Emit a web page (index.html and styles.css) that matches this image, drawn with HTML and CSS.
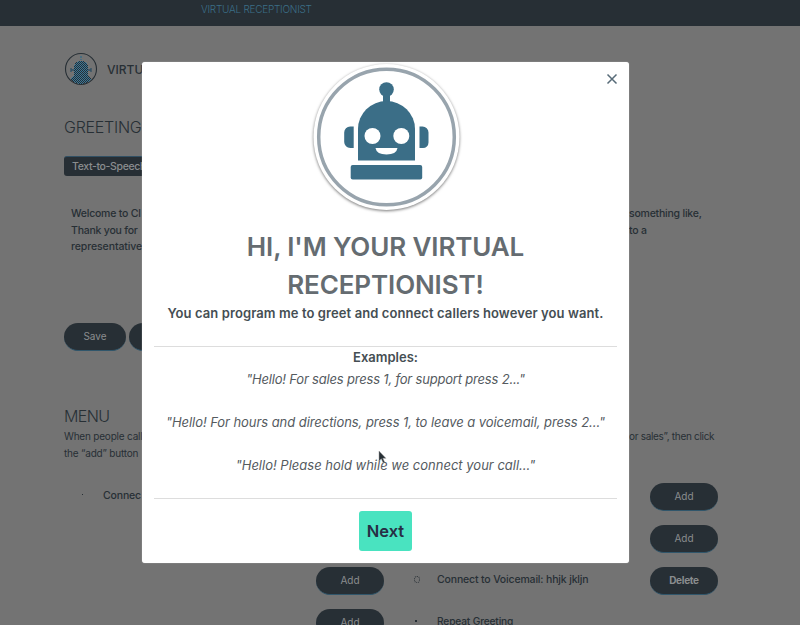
FILE: index.html
```html
<!DOCTYPE html>
<html lang="en">
<head>
<meta charset="utf-8">
<title>Virtual Receptionist</title>
<link rel="stylesheet" href="styles.css">
</head>
<body>
<header class="topbar"><span class="crumb">VIRTUAL RECEPTIONIST</span></header>
<main class="page">
  <div class="brand">
    <svg class="brand-icon" width="34" height="34" viewBox="0 0 34 34">
      <defs><pattern id="mesh" width="2" height="2" patternUnits="userSpaceOnUse"><rect width="2" height="2" fill="#3b7898"/><path d="M0 0h1v1H0zM1 1h1v1H1z" fill="#272f35"/></pattern></defs>
      <circle cx="17" cy="17" r="15.5" fill="none" stroke="#272f35" stroke-width="1.1"/>
      <path d="M17 4v4" stroke="#3b6e87" stroke-width="1.5" stroke-dasharray="2 1"/>
      <path d="M10 27V16q0-7 7-7t7 7v8l3 2v2q-10 8-20 0v-2l3-2z" fill="url(#mesh)" shape-rendering="crispEdges"/>
      <path d="M7 16v4M27 16v4M7 18h3M24 18h3" stroke="#305064" stroke-width="1.3"/>
    </svg>
    <span class="brand-name">VIRTU</span>
  </div>
  <h2 class="section-title greeting-title">GREETING</h2>
  <div class="tab">Text-to-Speech</div>
  <div class="message">
    <div class="line"><span class="m1">Welcome to Cl</span><span class="r1">something like,</span></div>
    <div class="line"><span class="m2">Thank you for</span><span class="r2">to a</span></div>
    <div class="line"><span class="m3">representative</span></div>
  </div>
  <div class="actions"><span class="pill save">Save</span><span class="pill save"></span></div>
  <h2 class="section-title menu-title">MENU</h2>
  <div class="help">
    <div class="line"><span class="h1">When people call</span><span class="hr1">or sales”, then click</span></div>
    <div class="line"><span class="h2">the “add” button</span></div>
  </div>
  <div class="menu">
    <div class="row"><i class="dot"></i><span class="item left">Connec</span><span class="pill end">Add</span></div>
    <div class="row"><span class="pill end">Add</span></div>
    <div class="row"><span class="pill mid">Add</span><i class="ring"></i><span class="item voicemail">Connect to Voicemail: hhjk jkljn</span><span class="pill end strong">Delete</span></div>
    <div class="row"><span class="pill mid">Add</span><i class="dot second"></i><span class="item repeat">Repeat Greeting</span></div>
  </div>
</main>
<section class="modal">
  <svg class="close" width="12" height="12" viewBox="0 0 12 12"><path d="M1.500 1.500l9 9M10.500 1.500l-9 9" stroke="#576b78" stroke-width="1.500"/></svg>
  <svg class="robot" width="156" height="156" viewBox="0 0 156 156">
    <circle class="disc" cx="78.500" cy="77" r="73" fill="#fff"/>
    <circle cx="78.500" cy="77" r="67.800" fill="none" stroke="#98a4ad" stroke-width="3.500"/>
    <g fill="#3b6e87">
      <circle cx="78.500" cy="29.500" r="7.300"/>
      <path d="M75 34h7v9h-7z"/>
      <path d="M50 100.500V69a28.500 28 0 0 1 57 0v31.500z"/>
      <path d="M45.700 66.500v21.500h-3.500a6 6 0 0 1-6-6v-9.500a6 6 0 0 1 6-6zM111.500 66.500v21.500h3.500a5.500 5.500 0 0 0 5.500-5.500v-10a6 6 0 0 0-6-6z"/>
      <rect x="42.700" y="105" width="71.500" height="14.500" rx="2"/>
    </g>
    <g fill="#fff"><circle cx="64.500" cy="76" r="8"/><circle cx="93.300" cy="76" r="8"/><path d="M67.500 88h22q-1 6.500-11 6.500T67.500 88z"/></g>
  </svg>
  <h1><span class="t1">HI, I'M YOUR VIRTUAL</span><br><span class="t2">RECEPTIONIST!</span></h1>
  <p class="lead">You can program me to greet and connect callers however you want.</p>
  <div class="examples">
    <p class="label">Examples:</p>
    <p class="quote q1">"Hello! For sales press 1, for support press 2..."</p>
    <p class="quote q2">"Hello! For hours and directions, press 1, to leave a voicemail, press 2..."</p>
    <p class="quote q3">"Hello! Please hold while we connect your call..."</p>
  </div>
  <button class="next">Next</button>
</section>
<svg class="cursor" width="9" height="14" viewBox="0 0 9 14"><path d="M1 1v10l2.300-2.200 1.800 4 1.500-.7-1.800-3.800h3.100z" fill="#272f35" stroke="#999" stroke-width=".5"/></svg>
</body>
</html>
```
FILE: styles.css
```css
* { box-sizing: border-box; }
body { margin: 0; width: 800px; height: 625px; overflow: hidden; position: relative; background: #737373; color: #272f35; font-family: Inter, "Open Sans", sans-serif; }
p, h1, h2 { margin: 0; }
span { white-space: nowrap; }
.topbar { height: 26px; background: #272f35; padding-left: 201px; line-height: 18px; }
.crumb { display: block; color: #3b6e87; font-size: 10px; font-weight: 300; letter-spacing: -.25px; }
.page { padding-left: 64px; }
.brand { display: flex; align-items: center; height: 34px; margin-top: 26px; width: 78px; overflow: hidden; }
.brand-icon { flex: none; }
.brand-name { margin-left: 9px; font-size: 12px; font-weight: 500; }
.section-title { font-size: 16px; font-weight: 300; line-height: 20px; height: 20px; letter-spacing: -.25px; }
.greeting-title { margin-top: 31px; }
.menu-title { letter-spacing: -.6px; }
.tab { margin-top: 19px; width: 90px; height: 20px; line-height: 19px; padding-left: 8px; background: #272f35; color: #8a8d8f; border-radius: 3px; font-size: 10.500px; letter-spacing: -.35px; white-space: nowrap; border-top: 1px solid #315064; font-weight: 500; }
.message { margin: 30px 0 0 7px; font-size: 10.500px; font-weight: 500; letter-spacing: -.22px; }
.line { display: flex; height: 16.700px; line-height: 16.700px; }
.m1, .m2 { width: 71px; flex: none; }
.r1, .r2 { margin-left: 487px; }
.m3 { letter-spacing: -.1px; }
.actions { display: flex; gap: 3px; width: 90px; overflow: hidden; margin-top: 67px; }
.pill { flex: none; width: 68px; height: 28px; border-radius: 14px; background: #272f35; color: #8a8d8f; font-size: 10px; line-height: 27px; text-align: center; border-bottom: 1px solid #30566b; }
.save { width: 62px; }
.menu-title { margin-top: 55px; }
.help { margin-top: 2px; font-size: 10px; font-weight: 400; letter-spacing: -.2px; }
.h1, .h2 { width: 78px; flex: none; }
.hr1 { margin-left: 487px; letter-spacing: -.3px; }
.menu { margin-top: 21px; }
.row { height: 41.700px; display: flex; align-items: flex-start; width: 654px; }
.row .end, .row .mid { margin-top: 1px; }
.item { font-size: 10.500px; line-height: 28px; font-weight: 500; letter-spacing: -.16px; }
.left { margin-left: 20px; width: 39px; }
.end { margin-left: auto; }
.mid { margin-left: 252px; }
.strong { font-weight: 700; letter-spacing: -.3px; }
.dot { width: 1px; height: 1px; background: #272f35; margin: 12px 0 0 18px; }
.dot.second { margin-left: 31px; width: 2px; height: 2px; }
.ring { width: 6px; height: 7px; border: 1px dotted #272f35; border-radius: 3px; margin: 10px 0 0 30px; }
.voicemail { margin-left: 17px; }
.repeat { margin-left: 20px; font-size: 10.200px; line-height: 27px; }
.modal { position: absolute; left: 142px; top: 62px; width: 487px; height: 501px; padding: 0 12px; background: #fff; border-radius: 3px; box-shadow: 0 0 1px #ddd; text-align: center; color: #454e53; }
.close { position: absolute; right: 11px; top: 11px; }
.robot { display: block; margin: -2px auto 0; }
.disc { filter: drop-shadow(0 1px 1.500px #777); }
h1 { margin-top: 12px; font-size: 26px; line-height: 38px; font-weight: 600; color: #656c71; letter-spacing: -.12px; }
.lead { margin-top: -1px; font-size: 13px; line-height: 21px; height: 43px; font-weight: 600; white-space: nowrap; letter-spacing: .09px; }
.examples { border: solid #ddd; border-width: 1px 0; height: 153px; font-size: 13px; line-height: 21.500px; }
.label { font-weight: 600; }
.quote { font-style: italic; font-weight: 400; color: #555b5f; margin-bottom: 21.500px; white-space: nowrap; }
.q1 { letter-spacing: -.19px; }
.q2 { letter-spacing: -.06px; }
.next { display: block; margin: 12px auto 0; width: 53px; height: 40px; border: 0; border-radius: 3px; padding: 0; background: #49e3c0; color: #272f45; font: 600 16.500px Inter, sans-serif; }
.cursor { position: absolute; left: 378px; top: 450px; }
```
